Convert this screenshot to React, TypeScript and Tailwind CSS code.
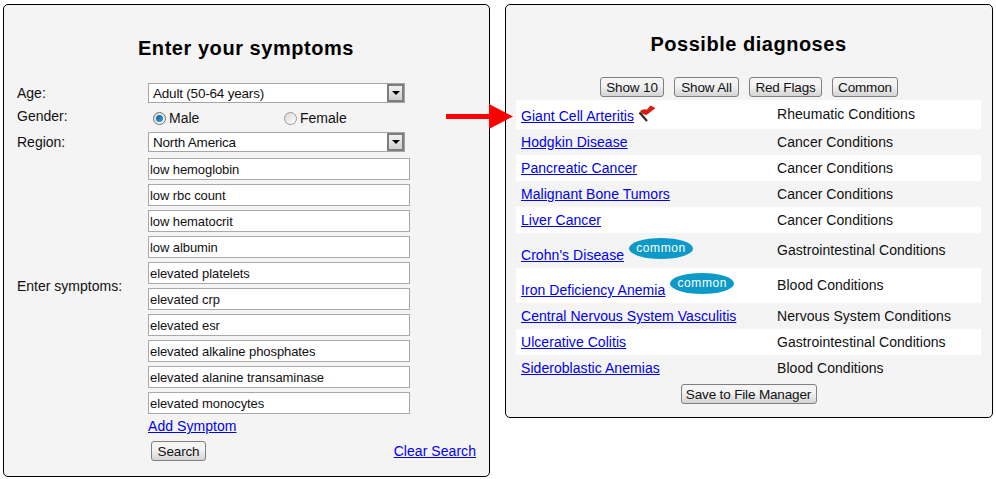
const btn = "h-5 rounded-[3px] border border-[#808080] bg-gradient-to-b from-[#f4f4f4] from-40% to-[#d4d4d4] pt-[1px] text-[13.5px] tracking-[-0.15px] leading-none text-[#111] flex items-center justify-center";
const link = "text-[14px] leading-4 text-[#0000ee] underline tracking-[0.05px]";
const symptoms = ["low hemoglobin","low rbc count","low hematocrit","low albumin","elevated platelets","elevated crp","elevated esr","elevated alkaline phosphates","elevated alanine transaminase","elevated monocytes"];
const diagnoses: [string,string,string?,number?][] = [
  ["Giant Cell Arteritis","Rheumatic Conditions","flag",29],
  ["Hodgkin Disease","Cancer Conditions",undefined,26],
  ["Pancreatic Cancer","Cancer Conditions",undefined,26],
  ["Malignant Bone Tumors","Cancer Conditions",undefined,26],
  ["Liver Cancer","Cancer Conditions",undefined,26],
  ["Crohn's Disease","Gastrointestinal Conditions","common",35],
  ["Iron Deficiency Anemia","Blood Conditions","common",35],
  ["Central Nervous System Vasculitis","Nervous System Conditions",undefined,26],
  ["Ulcerative Colitis","Gastrointestinal Conditions",undefined,26],
  ["Sideroblastic Anemias","Blood Conditions",undefined,26],
];

function Select({ value }: { value: string }) {
  return (
    <div className="h-5 w-[257px] border border-[#a5a5a5] bg-white flex items-center justify-between text-[13.5px] tracking-[-0.2px] text-[#111] pl-[4px]">
      <span className="pt-[2px]">{value}</span>
      <span className="w-[17px] h-[18px] border-2 border-[#7d7d7d] bg-gradient-to-b from-[#f2f2f2] to-[#cfcfcf] flex items-center justify-center">
        <span className="w-0 h-0 border-x-[4px] border-x-transparent border-t-[4px] border-t-black" />
      </span>
    </div>
  );
}

function Radio({ on }: { on?: boolean }) {
  return (
    <span className={"w-[13px] h-[13px] rounded-full border bg-gradient-to-br from-[#d8d8d8] to-white flex items-center justify-center " + (on ? "border-[#6f6f6f]" : "border-[#9a9a9a]")}>
      {on && <span className="w-[7px] h-[7px] rounded-full bg-gradient-to-br from-[#0f5f98] to-[#3f9fd8]" />}
    </span>
  );
}

function Flag() {
  return (
    <svg width="17" height="17" viewBox="0 0 17 17" className="ml-[5px] -mt-[1px]">
      <path d="M0.5 7.5 L8 16" stroke="#222" strokeWidth="2" />
      <path d="M1 6 Q4 3.5 8 4.5 L11.5 0.5 L16.5 3 L11.5 7 L7.5 10 L3.5 9 Z" fill="#d81e10" />
    </svg>
  );
}

export default function App() {
  return (
    <div className="relative w-[996px] h-[479px] bg-white flex items-start gap-[15px] pl-[3px] pt-1 font-['Liberation_Sans',Arial,sans-serif] text-[#111] overflow-hidden">
      <section className="w-[487px] h-[473px] rounded-[5px] border border-black bg-[#f4f4f4] flex flex-col pt-[31px]">
        <h1 className="text-[20px] leading-6 font-bold text-black text-center tracking-[0.55px] -ml-[1px]">Enter your symptoms</h1>
        <div className="mt-[23px] flex flex-col pl-[13px] text-[14px]">
          <div className="flex h-5 items-center"><span className="w-[131px]">Age:</span><Select value="Adult (50-64 years)" /></div>
          <div className="flex h-[29px] items-center">
            <span className="w-[131px] -mt-[3px]">Gender:</span>
            <label className="w-[136px] pl-[5px] flex items-center gap-[3px] mt-[1px]"><Radio on /><span>Male</span></label>
            <label className="flex items-center gap-[3px] mt-[1px]"><Radio /><span>Female</span></label>
          </div>
          <div className="flex h-5 items-center"><span className="w-[131px]">Region:</span><Select value="North America" /></div>
          <div className="flex items-center mt-[6px]">
            <span className="w-[131px]">Enter symptoms:</span>
            <div className="flex flex-col gap-1">
              {symptoms.map((s) => (
                <div key={s} className="w-[262px] h-[22px] border border-[#a9a9a9] bg-white pl-[1px] pt-[2px] flex items-center text-[13px] tracking-[-0.08px]">{s}</div>
              ))}
            </div>
          </div>
          <div className="pl-[131px] mt-[2px] h-4"><a className={link}>Add Symptom</a></div>
          <div className="pl-[134px] mt-[9px] flex items-center justify-between w-[459px]">
            <button className={btn + " w-[55px]"}>Search</button>
            <a className={link + " tracking-[0.1px]"}>Clear Search</a>
          </div>
        </div>
      </section>

      <section className="w-[488px] h-[414px] rounded-[5px] border border-black bg-[#f4f4f4] flex flex-col pt-[27px]">
        <h1 className="text-[20px] leading-6 font-bold text-black text-center tracking-[0.52px] -ml-[1px]">Possible diagnoses</h1>
        <div className="mt-[21px] flex justify-center gap-[10px]">
          <button className={btn + " w-[64px]"}>Show 10</button>
          <button className={btn + " w-[65px]"}>Show All</button>
          <button className={btn + " w-[73px]"}>Red Flags</button>
          <button className={btn + " w-[66px]"}>Common</button>
        </div>
        <div className="mt-[3px] ml-[10px] w-[465px] flex flex-col">
          {diagnoses.map(([name, cat, badge, h], i) => (
            <div key={name} style={{ height: h }} className={"flex items-center " + (i % 2 === 0 ? "bg-white" : "bg-[#f4f4f4]")}>
              <div className={"w-[261px] pl-[5px] flex items-start " + (badge === "common" ? "pt-[5px]" : "")}>
                <a className={link + (badge === "common" ? " mt-[4px]" : "") + (badge === "flag" ? " mt-[2px]" : "")}>{name}</a>
                {badge === "flag" && <Flag />}
                {badge === "common" && (
                  <span className="ml-[5px] -mt-[5px] w-[64px] h-[21px] rounded-[50%] bg-[#0d9ac8] text-white text-[12px] leading-[21px] tracking-[0.6px] text-center">common</span>
                )}
              </div>
              <span className={"text-[14px] tracking-[0.05px] " + (badge ? "-mt-[1px]" : "")}>{cat}</span>
            </div>
          ))}
        </div>
        <div className="mt-[3px] flex justify-center -ml-[1px]">
          <button className={btn + " w-[136px]"}>Save to File Manager</button>
        </div>
      </section>

      <svg width="68" height="26" viewBox="0 0 68 26" className="absolute left-[446px] top-[104px]">
        <path d="M0 10 H43 V0 L67 12.5 L43 25 V15 H0 Z" fill="#ff0000" />
      </svg>
    </div>
  );
}
